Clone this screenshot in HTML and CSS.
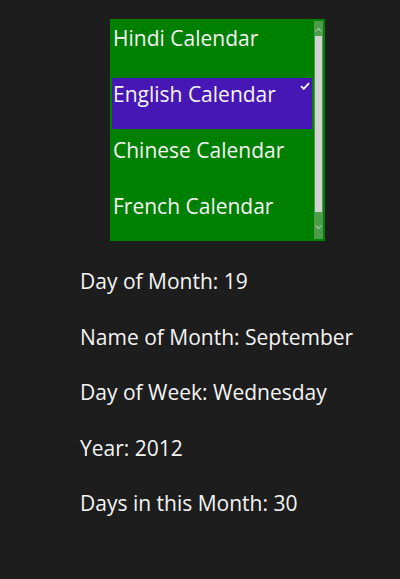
FILE: index.html
```html
<!DOCTYPE html>
<html lang="en">
<head>
<meta charset="utf-8">
<title>Calendars</title>
<link rel="stylesheet" href="styles.css">
</head>
<body>
<main class="page">
  <div class="listbox">
    <ul class="items">
      <li class="item">Hindi Calendar</li>
      <li class="item selected">English Calendar
        <svg class="check" viewBox="0 0 10 8" width="10" height="8"><path d="M1 4.2 L3.8 6.8 L9 1.2" fill="none" stroke="#fff" stroke-width="1.8"/></svg>
      </li>
      <li class="item">Chinese Calendar</li>
      <li class="item">French Calendar</li>
    </ul>
    <div class="scrollbar">
      <svg class="arrow" viewBox="0 0 9 6" width="9" height="6"><path d="M1.5 4.5 L4.5 1.5 L7.5 4.5" fill="none" stroke="#9fc79f" stroke-width="1.2"/></svg>
      <div class="thumb"></div>
      <svg class="arrow" viewBox="0 0 9 6" width="9" height="6"><path d="M1.5 1.5 L4.5 4.5 L7.5 1.5" fill="none" stroke="#9fc79f" stroke-width="1.2"/></svg>
    </div>
  </div>
  <dl class="details">
    <div class="row">Day of Month: 19</div>
    <div class="row">Name of Month: September</div>
    <div class="row">Day of Week: Wednesday</div>
    <div class="row">Year: 2012</div>
    <div class="row">Days in this Month: 30</div>
  </dl>
</main>
</body>
</html>
```
FILE: styles.css
```css
html, body {
  margin: 0;
  padding: 0;
  background: #1d1d1d;
}
body {
  width: 400px;
  height: 579px;
  overflow: hidden;
  font-family: "Open Sans", "Noto Sans", sans-serif;
  color: #f4f4f4;
}
.page {
  padding-top: 19px;
}
.listbox {
  margin-left: 110px;
  width: 215px;
  height: 222px;
  box-sizing: border-box;
  background: #008000;
  border: 2px solid #008000;
  display: flex;
  overflow: hidden;
}
.items {
  list-style: none;
  margin: 0;
  padding: 1px 0 0;
  flex: 1;
}
.item {
  position: relative;
  height: 51px;
  margin: 0 2px 5px 0;
  padding: 3px 0 0 1px;
  font-size: 21px;
  line-height: 27px;
  box-sizing: border-box;
  white-space: nowrap;
}
.item.selected {
  background: #4617b4;
}
.check {
  position: absolute;
  top: 4px;
  right: 2px;
}
.scrollbar {
  width: 9px;
  background: #4c9c4c;
  display: flex;
  flex-direction: column;
  align-items: center;
}
.arrow {
  margin: 9px 0;
}
.arrow:first-child {
  margin-bottom: 0;
  margin-top: 6px;
}
.thumb {
  width: 7px;
  height: 179px;
  margin: 3px 0;
  background: #d2d2d2;
}
.details {
  margin: 27px 0 0 80px;
  font-size: 21px;
}
.row {
  height: 55.5px;
  line-height: 27px;
}
```
